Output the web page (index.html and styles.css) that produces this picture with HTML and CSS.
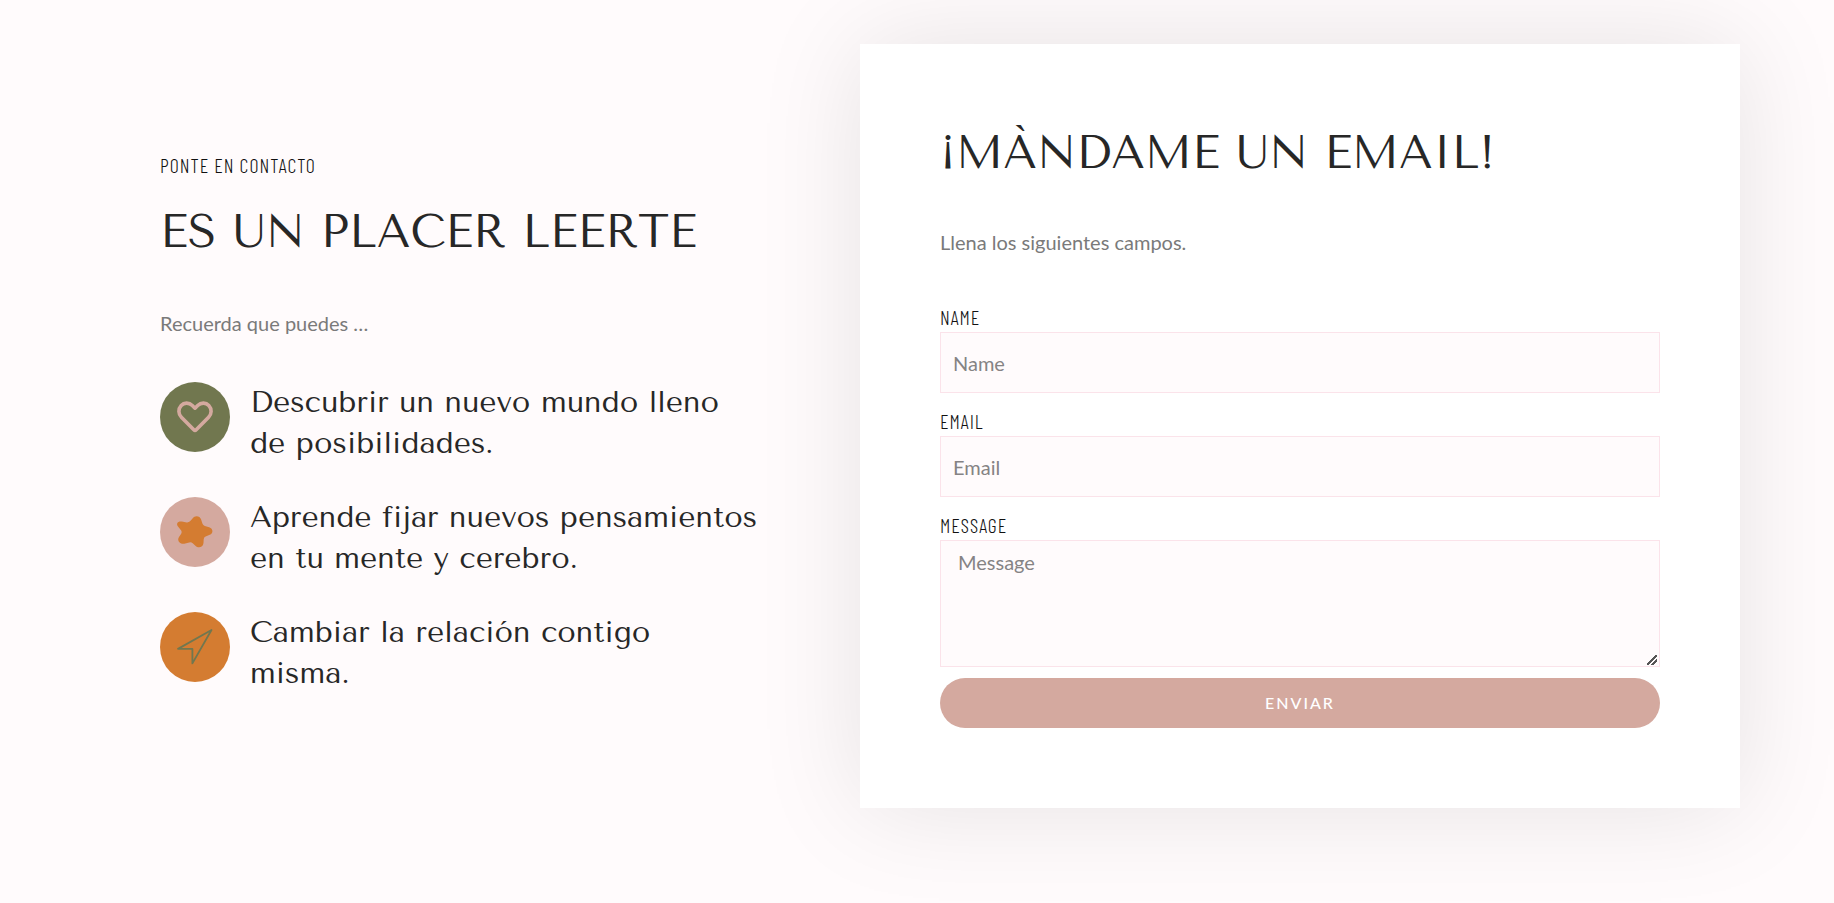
FILE: index.html
```html
<!DOCTYPE html>
<html lang="es">
<head>
<meta charset="utf-8">
<meta name="viewport" content="width=device-width, initial-scale=1">
<title>Contacto</title>
<link rel="stylesheet" href="styles.css">
</head>
<body>
<main class="contact">
  <section class="intro">
    <p class="eyebrow">PONTE EN CONTACTO</p>
    <h1 class="title">ES UN PLACER LEERTE</h1>
    <p class="lead">Recuerda que puedes …</p>
    <ul class="reasons">
      <li class="reason">
        <svg class="badge badge-olive" viewBox="0 0 70 70" aria-hidden="true">
          <path d="M35 26.2 32.3 23.5C29 20.2 24 20.4 21.2 23.5 18 27 18.2 32 21.4 35.2L33.8 47.8Q35 49 36.2 47.8L48.6 35.2C51.8 32 52 27 48.8 23.5 46 20.4 41 20.2 37.7 23.5Z" fill="none" stroke="#d4a99f" stroke-width="3.6" stroke-linejoin="round"/>
        </svg>
        <p class="reason-text">Descubrir un nuevo mundo lleno de posibilidades.</p>
      </li>
      <li class="reason">
        <svg class="badge badge-rose" viewBox="0 0 70 70" aria-hidden="true">
          <path d="M32.5 21.4C35 18.2 40 18.8 41.2 22.8L42.4 26.6Q43 28.4 44.8 28.9L49.2 30.2C53.4 31.6 53.4 36.4 49.8 37.8L45.6 39.6Q43.8 40.4 43.7 42.2L43.5 46C43 50.6 38.2 51.6 35.4 48.8L32.7 46.2Q31.2 44.8 29.2 45.4L25.2 46.6C20.2 47.8 16.5 43.8 19 40L21.2 36.8Q22.2 35.2 21.2 33.6L18 29.6C15.6 26.2 18.4 23.8 21.8 24.6L26.8 25.4Q29.4 25.6 30.8 23.6Z" fill="#d47c31"/>
        </svg>
        <p class="reason-text">Aprende fijar nuevos pensamientos en tu mente y cerebro.</p>
      </li>
      <li class="reason">
        <svg class="badge badge-orange" viewBox="0 0 70 70" aria-hidden="true">
          <path d="M51.5 18 18 36.9H32.4V51.4Z" fill="none" stroke="#71774f" stroke-width="1.8" stroke-linejoin="round"/>
        </svg>
        <p class="reason-text">Cambiar la relación contigo misma.</p>
      </li>
    </ul>
  </section>
  <section class="card">
    <h2 class="title">¡MÀNDAME UN EMAIL!</h2>
    <p class="lead">Llena los siguientes campos.</p>
    <form class="form">
      <div class="field">
        <label class="label" for="name">NAME</label>
        <input class="control" id="name" type="text" placeholder="Name">
      </div>
      <div class="field">
        <label class="label" for="email">EMAIL</label>
        <input class="control" id="email" type="email" placeholder="Email">
      </div>
      <div class="field">
        <label class="label" for="message">MESSAGE</label>
        <textarea class="control control-area" id="message" placeholder="Message"></textarea>
      </div>
      <button class="submit" type="submit">ENVIAR</button>
    </form>
  </section>
</main>
</body>
</html>
```
FILE: styles.css
```css
* {
  box-sizing: border-box;
}

body {
  margin: 0;
  background: #fffbfc;
  color: #272727;
  font-family: Lato, "Liberation Sans", sans-serif;
}

p,
h1,
h2,
ul {
  margin: 0;
  padding: 0;
}

.contact {
  display: grid;
  grid-template-columns: 35fr 44fr;
  align-items: center;
  padding: 44px 94px 95px 160px;
}

.intro {
  padding: 0 100px 6px 0;
}

.eyebrow,
.label {
  color: #111;
  font-family: "Barlow Condensed", "Roboto Condensed", Roboto, sans-serif;
  font-size: 20px;
  font-weight: 300;
  letter-spacing: 1px;
}

.eyebrow {
  line-height: 24px;
}

.title {
  font-family: "Tenor Sans", Lato, sans-serif;
  font-size: 46px;
  font-weight: 400;
  line-height: 58px;
}

.intro .title {
  margin-top: 26px;
}

.lead {
  margin-top: 47px;
  color: #7a7a7a;
  font-size: 20px;
  line-height: 30px;
}

.reasons {
  display: grid;
  gap: 33px;
  margin-top: 44px;
  list-style: none;
}

.reason {
  display: flex;
  align-items: flex-start;
  gap: 20px;
}

.badge {
  flex: none;
  width: 70px;
  height: 70px;
  border-radius: 50%;
}

.badge-olive {
  background: #71774f;
}

.badge-rose {
  background: #d4a99f;
}

.badge-orange {
  background: #d47c31;
}

.reason-text {
  font-family: "Tenor Sans", Lato, sans-serif;
  font-size: 30px;
  line-height: 41px;
}

.card {
  padding: 80px;
  background: #fff;
  box-shadow: 0 0 100px rgba(0, 0, 0, 0.1);
}

.card .lead {
  margin-top: 45px;
}

.form {
  display: grid;
  margin-top: 47px;
}

.field {
  display: grid;
  gap: 2px;
  margin-bottom: 15px;
}

.label {
  line-height: 26px;
}

.control {
  width: 100%;
  height: 61px;
  padding: 0 12px;
  border: 1px solid #fbe3ea;
  border-radius: 0;
  background: #fffbfc;
  color: #272727;
  font: 20px/30px Lato, "Liberation Sans", sans-serif;
}

.control::placeholder {
  color: #858384;
  opacity: 1;
}

.control-area {
  height: 127px;
  padding: 6px 17px;
  resize: vertical;
}

.control-area::-webkit-resizer {
  background: linear-gradient(135deg, transparent 43%, #555 43% 56%, transparent 56% 70%, #555 70% 82%, transparent 82%) 3px 4px / 10px 10px no-repeat;
}

.field:last-of-type {
  margin-bottom: 11px;
}

.submit {
  height: 50px;
  border: 0;
  border-radius: 25px;
  background: #d4a99f;
  color: #fff;
  font: 500 16px/20px Lato, "Liberation Sans", sans-serif;
  letter-spacing: 2px;
}
```
